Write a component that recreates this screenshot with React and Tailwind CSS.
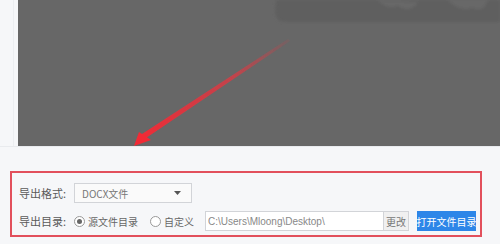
import React from "react";

export default function App() {
  return (
    <div
      className="w-[500px] h-[244px] bg-[#f6f7f9] overflow-hidden flex flex-col whitespace-nowrap"
      style={{ fontFamily: '"Noto Sans CJK SC", "Noto Sans", sans-serif' }}
    >
      <div className="flex h-[146px] shrink-0">
        <div className="w-[18px] h-full flex justify-start shrink-0">
          <div className="ml-[13px] w-px h-full bg-[#eceef1]" />
        </div>
        <div className="flex-1 h-full bg-[#676767]">
          <svg width="482" height="146" viewBox="0 0 482 146" className="block">
            <defs>
              <linearGradient id="ar" x1="270" y1="40" x2="118" y2="145" gradientUnits="userSpaceOnUse">
                <stop offset="0" stopColor="#e8353f" stopOpacity="0.1" />
                <stop offset="0.35" stopColor="#e8353f" stopOpacity="0.7" />
                <stop offset="1" stopColor="#f22a35" stopOpacity="1" />
              </linearGradient>
              <filter id="bl"><feGaussianBlur stdDeviation="0.6" /></filter>
              <filter id="bl2"><feGaussianBlur stdDeviation="1.5" /></filter>
            </defs>
            <g filter="url(#bl2)">
              <path d="M258 0 H482 V22 H268 Q258 22 257 12 Z" fill="#5f5f5f" />
              <path d="M360 0 Q368 10 380 6 Q392 14 400 2 Z" fill="#6e6e6e" opacity="0.6" />
              <path d="M430 0 Q440 12 455 8 Q465 14 470 0 Z" fill="#707070" opacity="0.5" />
            </g>
            <g filter="url(#bl)">
              <polygon points="270,39 272,41 128,138 122,140 124,134" fill="url(#ar)" />
              <polygon points="116,146 121,132 133,140" fill="#f22a35" />
            </g>
          </svg>
        </div>
      </div>
      <div className="h-px bg-[#e9ebee] shrink-0" />
      <div className="ml-[10px] mt-[24px] w-[472px] h-[66px] shrink-0 border-2 border-[#e2505c] bg-[#f6f7f9] pl-[7px] pt-[10px] flex flex-col gap-[8px] text-[11px] text-[#5a5a5a]">
        <div className="flex items-center h-[20px]">
          <span className="w-[55px] shrink-0">导出格式:</span>
          <div className="w-[118px] h-[20px] shrink-0 border border-[#d2d4d8] bg-[#fafafa] flex items-center justify-between pl-[7px] pr-[10px] text-[10px] text-[#777]">
            <span>DOCX文件</span>
            <svg width="7" height="4" viewBox="0 0 7 4"><path d="M0 0 H7 L3.5 4 Z" fill="#555" /></svg>
          </div>
        </div>
        <div className="flex items-center h-[20px]">
          <span className="w-[55px] shrink-0">导出目录:</span>
          <div className="flex items-center shrink-0">
            <span className="w-[11px] h-[11px] rounded-full border border-[#999] flex items-center justify-center bg-white">
              <span className="w-[5px] h-[5px] rounded-full bg-[#666]" />
            </span>
            <span className="ml-[3px] text-[10px] text-[#666]">源文件目录</span>
          </div>
          <div className="flex items-center ml-[12px] shrink-0">
            <span className="w-[11px] h-[11px] rounded-full border border-[#999] bg-white" />
            <span className="ml-[3px] text-[10px] text-[#666]">自定义</span>
          </div>
          <div className="ml-[11px] w-[204px] h-[20px] shrink-0 flex border border-[#d2d4d8] bg-white">
            <div className="flex-1 flex items-center pl-[2px] text-[10px] text-[#888]" style={{ fontFamily: '"Liberation Sans", sans-serif' }}>
              C:\Users\Mloong\Desktop\
            </div>
            <div className="w-[25px] border-l border-[#d2d4d8] bg-[#f0f0f0] flex items-center justify-center text-[10px] text-[#777]">
              更改
            </div>
          </div>
          <div className="ml-[8px] w-[59px] h-[20px] shrink-0 bg-[#2d86e8] text-white text-[10px] flex items-center justify-center">
            打开文件目录
          </div>
        </div>
      </div>
    </div>
  );
}
